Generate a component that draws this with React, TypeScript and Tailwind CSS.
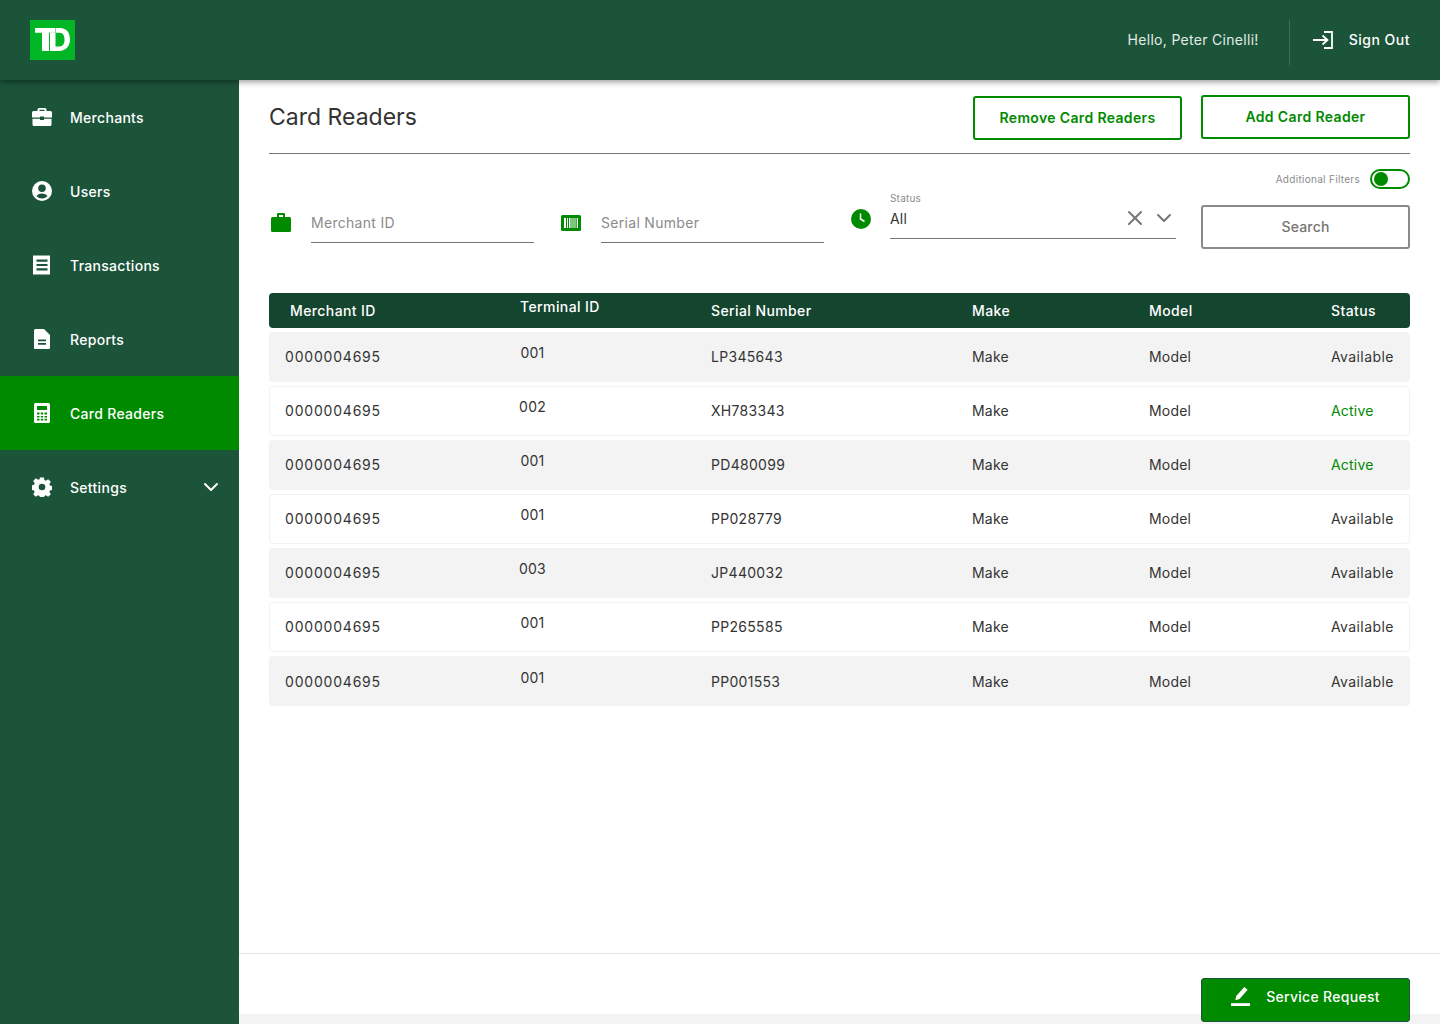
import { ChevronDown, X } from "lucide-react";
import type { ReactNode } from "react";

const font = "font-['Inter','Noto_Sans',sans-serif]";

const navItems: { label: string; active?: boolean; caret?: boolean; icon: ReactNode }[] = [
  {
    label: "Merchants",
    icon: (
      <svg width="20" height="18" viewBox="0 0 20 18" fill="white">
        <path fillRule="evenodd" d="M7 0h6a1.500 1.500 0 0 1 1.500 1.500V3h4A1.500 1.500 0 0 1 20 4.500v5h-8v-1H8v1H0v-5A1.500 1.500 0 0 1 1.500 3h4V1.500A1.500 1.500 0 0 1 7 0Zm.5 1.800V3h5V1.800h-5Z" />
        <path d="M.5 10.700H8V12h4v-1.300h7.500v5.800A1.500 1.500 0 0 1 18 18H2a1.500 1.500 0 0 1-1.500-1.500v-5.800Z" />
      </svg>
    ),
  },
  {
    label: "Users",
    icon: (
      <svg width="20" height="20" viewBox="0 0 20 20" fill="white">
        <path fillRule="evenodd" d="M10 0a10 10 0 1 1 0 20 10 10 0 0 1 0-20Zm0 3.500a3.800 3.800 0 1 0 0 7.600 3.800 3.800 0 0 0 0-7.600Zm0 9c-2.500 0-4.600 1-5.500 2.600A7.300 7.300 0 0 0 10 17.600a7.300 7.300 0 0 0 5.500-2.500c-.9-1.600-3-2.600-5.500-2.600Z" />
      </svg>
    ),
  },
  {
    label: "Transactions",
    icon: (
      <svg width="18" height="20" viewBox="0 0 18 20" fill="white">
        <path fillRule="evenodd" d="M0 1l1-1 1 1 1-1 1 1 1-1 1 1 1-1 1 1 1-1 1 1 1-1 1 1 1-1 1 1 1-1 1 1 1-1 0 20-1-1-1 1-1-1-1 1-1-1-1 1-1-1-1 1-1-1-1 1-1-1-1 1-1-1-1 1-1-1-1 1-1-1V1Zm3.500 3.500v2.200h11V4.500h-11Zm0 4.400v2.200h11V8.900h-11Zm0 4.400v2.200h11v-2.200h-11Z" />
      </svg>
    ),
  },
  {
    label: "Reports",
    icon: (
      <svg width="20" height="20" viewBox="0 0 20 20" fill="white">
        <path fillRule="evenodd" d="M3.500 0H12l6 6v13a1 1 0 0 1-1 1H3a1 1 0 0 1-1-1V1.500A1.500 1.500 0 0 1 3.500 0ZM6 10.500v1.800h8v-1.800H6Zm0 3.500v1.800h8V14H6Z" />
      </svg>
    ),
  },
  {
    label: "Card Readers",
    active: true,
    icon: (
      <svg width="20" height="20" viewBox="0 0 20 20" fill="white">
        <path fillRule="evenodd" d="M3.500 0h13A1.500 1.500 0 0 1 18 1.500v17a1.500 1.500 0 0 1-1.500 1.500h-13A1.500 1.500 0 0 1 2 18.500v-17A1.500 1.500 0 0 1 3.500 0ZM5 3v4h10V3H5Zm0 6.500v2h2.500v-2H5Zm3.800 0v2h2.400v-2H8.800Zm3.700 0v2H15v-2h-2.500ZM5 13v1.500h2.500V13H5Zm3.800 0v1.500h2.400V13H8.800Zm3.700 0v1.500H15V13h-2.500Zm-7.500 2.700v1.800h2.500v-1.800H5Zm3.800 0v1.800h2.400v-1.800H8.800Zm3.700 0v1.800H15v-1.800h-2.500Z" />
      </svg>
    ),
  },
  {
    label: "Settings",
    caret: true,
    icon: (
      <svg width="20" height="20" viewBox="0 0 24 24" fill="white">
        <path fillRule="evenodd" d="M9.700.5h4.600l.6 3.100 1.800.8 2.700-1.800 3.200 3.200-1.800 2.700.8 1.800 3.100.6v4.600l-3.100.6-.8 1.800 1.800 2.700-3.200 3.200-2.700-1.800-1.800.8-.6 3.100H9.700l-.6-3.100-1.800-.8-2.700 1.800-3.200-3.200 1.800-2.700-.8-1.800-3.100-.6V9.900l3.100-.6.8-1.800-1.800-2.700 3.200-3.200 2.700 1.800 1.800-.8.6-3.100ZM12 8a4 4 0 1 0 0 8 4 4 0 0 0 0-8Z" />
      </svg>
    ),
  },
];

const rows = [
  { terminal: "001", serial: "LP345643", status: "Available" },
  { terminal: "002", serial: "XH783343", status: "Active" },
  { terminal: "001", serial: "PD480099", status: "Active" },
  { terminal: "001", serial: "PP028779", status: "Available" },
  { terminal: "003", serial: "JP440032", status: "Available" },
  { terminal: "001", serial: "PP265585", status: "Available" },
  { terminal: "001", serial: "PP001553", status: "Available" },
];

const gridCols = "grid grid-cols-[235px_191px_261px_177px_182px_1fr] items-center";

const App = () => {
  return (
    <div className={`${font} relative flex h-[1024px] w-[1440px] flex-col overflow-hidden bg-white`}>
      {/* top bar */}
      <header className="relative z-10 flex h-20 shrink-0 items-center justify-between bg-[#1b5439] pl-[30px] pr-[30px] shadow-[0_2px_6px_rgba(0,0,0,0.4)]">
        <svg width="45" height="40" viewBox="0 0 45 40">
          <rect width="45" height="40" fill="#00b624" />
          <path fill="white" d="M5 8h20v4.700h-6V31h-7V12.700H5V8Z" />
          <path fill="white" fillRule="evenodd" d="M20 12.700h5.500V8H30c7 0 10 5 10 11.500S36 31 29 31h-9V12.700Zm5.500 0v13.800h4c3.500 0 5-3 5-7s-1.500-6.800-5-6.800h-4Z" />
        </svg>
        <div className="flex items-center">
          <span className="mb-[2px] mr-px text-[14px] tracking-[0.3px] text-[#e3ebe7]">Hello, Peter Cinelli!</span>
          <div className="ml-[29px] mt-[5px] h-[45px] w-px bg-[#3d6e58]" />
          <svg className="ml-[23px]" width="20" height="18" viewBox="0 0 20 18" fill="none" stroke="white" strokeWidth="1.800">
            <path d="M0 9h14M9.500 4.500l5 4.500-5 4.500" />
            <path d="M11 1h8v16h-8" />
          </svg>
          <span className="mb-[2px] ml-4 text-[14px] font-medium tracking-[0.5px] text-white">Sign Out</span>
        </div>
      </header>

      <div className="flex min-h-0 flex-1">
        {/* sidebar */}
        <nav className="flex w-[239px] shrink-0 flex-col bg-[#1b5439]">
          {navItems.map((item) => (
            <div
              key={item.label}
              className={`flex h-[74px] items-center pl-8 pr-4 ${item.active ? "bg-[#008a00]" : ""}`}
            >
              <span className="flex w-5 justify-center">{item.icon}</span>
              <span className="ml-[18px] text-[14px] font-medium tracking-[0.3px] text-white">{item.label}</span>
              {item.caret && <ChevronDown className="ml-auto text-white" size={24} strokeWidth={2} />}
            </div>
          ))}
        </nav>

        {/* content */}
        <main className="flex min-w-0 flex-1 flex-col">
          <div className="flex-1 px-[30px]">
            <div className="flex h-[74px] items-center justify-between border-b border-[#757575] pt-[2px]">
              <h1 className="text-[23px] font-normal text-[#333]">Card Readers</h1>
              <div className="flex items-start gap-[19px]">
                <button className="mt-px h-11 w-[209px] rounded-[3px] border-2 border-[#008a00] pb-[1px] text-[14px] font-semibold tracking-[0.35px] text-[#008a00]">
                  Remove Card Readers
                </button>
                <button className="h-11 w-[209px] rounded-[3px] border-2 border-[#008a00] pb-[2px] text-[14px] font-semibold tracking-[0.35px] text-[#008a00]">
                  Add Card Reader
                </button>
              </div>
            </div>

            {/* filters */}
            <div className="mt-[15px] flex items-center justify-end gap-[10px]">
              <span className="text-[10px] tracking-[0.3px] text-[#8b8b8b]">Additional Filters</span>
              <div className="flex h-5 w-10 items-center rounded-full border-2 border-[#008a00] px-[2px]">
                <div className="h-3.5 w-3.5 rounded-full bg-[#008a00]" />
              </div>
            </div>
            <div className="flex h-[65px] items-start">
              <svg className="ml-[2px] mt-[24px]" width="20" height="19" viewBox="0 0 20 19" fill="#008a00">
                <path fillRule="evenodd" d="M7 0h6a1 1 0 0 1 1 1v3h4.500A1.500 1.500 0 0 1 20 5.500v12a1.500 1.500 0 0 1-1.500 1.500h-17A1.500 1.500 0 0 1 0 17.500v-12A1.500 1.500 0 0 1 1.500 4H6V1a1 1 0 0 1 1-1Zm1 2v2h4V2H8Z" />
              </svg>
              <div className="ml-5 mt-[15px] flex h-[39px] w-[223px] items-center border-b border-[#757575] pb-[2px]">
                <span className="text-[14px] tracking-[0.3px] text-[#8b8b8b]">Merchant ID</span>
              </div>
              <svg className="ml-[27px] mt-[26px]" width="20" height="16" viewBox="0 0 20 16">
                <rect width="20" height="16" rx="1.500" fill="#008a00" />
                <path fill="white" d="M3 3h2v10H3zM6 3h1v10H6zM8 3h1.500v10H8zM10.500 3h1v10h-1zM12.500 3h1v10h-1zM14.500 3h.8v10h-.8zM16 3h1v10h-1z" />
              </svg>
              <div className="ml-5 mt-[15px] flex h-[39px] w-[223px] items-center border-b border-[#757575] pb-[2px]">
                <span className="text-[14px] tracking-[0.3px] text-[#8b8b8b]">Serial Number</span>
              </div>
              <svg className="ml-[27px] mt-[20px]" width="20" height="20" viewBox="0 0 20 20">
                <circle cx="10" cy="10" r="10" fill="#008a00" />
                <path d="M9.500 4.500v5.500l4 2.500" fill="none" stroke="white" strokeWidth="1.500" />
              </svg>
              <div className="ml-[19px] mt-[3px] h-[47px] w-[286px] border-b border-[#757575]">
                <div className="text-[10px] leading-[12px] tracking-[0.2px] text-[#8b8b8b]">Status</div>
                <div className="mt-[2px] flex items-center">
                  <span className="text-[14px] tracking-[0.2px] text-[#333]">All</span>
                  <X className="ml-auto text-[#757575]" size={24} strokeWidth={2} />
                  <ChevronDown className="ml-[5px] text-[#757575]" size={24} strokeWidth={2} />
                </div>
              </div>
              <button className="ml-auto mt-[16px] h-11 w-[209px] rounded-[3px] border-2 border-[#8a8a8a] pb-[2px] text-[14px] font-medium tracking-[0.2px] text-[#757575]">
                Search
              </button>
            </div>

            {/* table */}
            <div className="mt-[39px] flex flex-col gap-1">
              <div className={`${gridCols} h-[35px] rounded-[4px] bg-[#14452f] pl-4 text-[14px] font-medium tracking-[0.4px] text-white`}>
                <span className="ml-[5px]">Merchant ID</span>
                <span className="pb-2">Terminal ID</span>
                <span>Serial Number</span>
                <span>Make</span>
                <span>Model</span>
                <span>Status</span>
              </div>
              {rows.map((row, i) => (
                <div
                  key={i}
                  className={`${gridCols} h-[50px] rounded-[4px] pl-4 text-[14px] tracking-[0.2px] text-[#333] ${
                    i % 2 === 0 ? "bg-[#f3f3f3]" : "bg-white shadow-[inset_0_0_0_1px_#f3f3f3]"
                  } ${i === rows.length - 1 ? "" : "pb-[2px]"}`}
                >
                  <span className="tracking-[0.8px]">0000004695</span>
                  <span className="flex w-[25px] justify-center pb-2">{row.terminal}</span>
                  <span className="tracking-[0.3px]">{row.serial}</span>
                  <span>Make</span>
                  <span>Model</span>
                  <span className={row.status === "Active" ? "text-[#008a00]" : "tracking-[0.4px]"}>{row.status}</span>
                </div>
              ))}
            </div>
          </div>

          {/* footer */}
          <div className="relative flex h-[71px] shrink-0 justify-end border-t border-[#e3e3e3] pr-[30px] pt-6">
            <div className="absolute inset-x-0 bottom-0 h-[10px] bg-[#f3f3f3]" />
            <button className="relative flex h-11 w-[209px] items-center justify-center gap-4 rounded-[3px] border border-[#1b5439] bg-[#008a00] pb-[7px] text-[14px] font-medium tracking-[0.3px] text-white">
              <svg width="19" height="19" viewBox="0 0 20 20" fill="white">
                <path d="M14 0l3.500 3-8.500 9.500-4.500 1.500 1-4.500L14 0Z" />
                <path d="M0 17h20v3H0z" />
              </svg>
              Service Request
            </button>
          </div>
        </main>
      </div>
    </div>
  );
};

export default App;
